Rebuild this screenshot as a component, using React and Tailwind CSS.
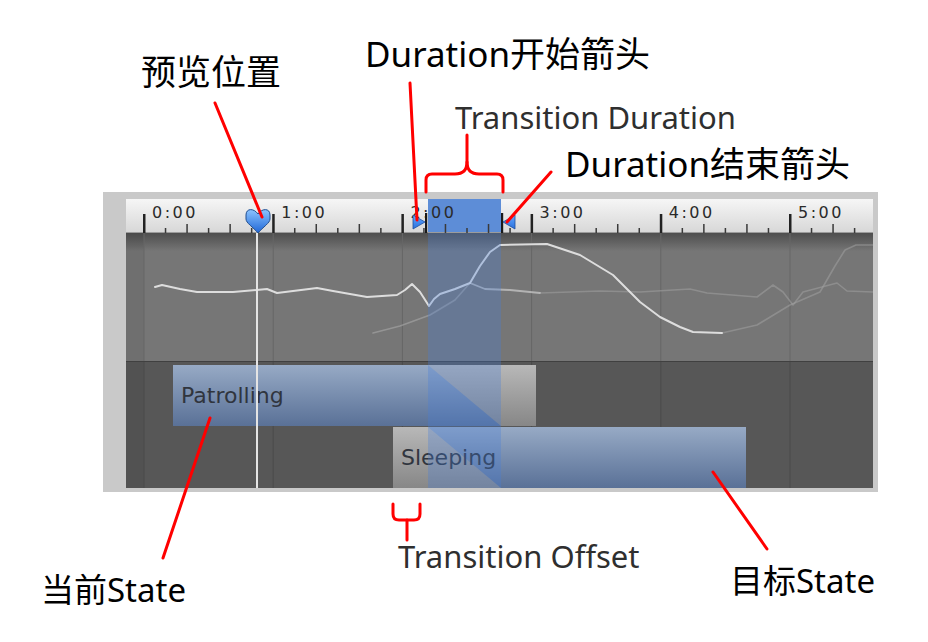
import React from 'react';

// timeline scale: 0:00 sits 18px into the inner panel, one minute = 129.2px
const UNIT = 129.2;
const X0 = 18;
const tx = (t) => X0 + t * UNIT;
const PANEL_W = 747;
const MAJORS = [0, 1, 2, 3, 4, 5];

const minorTicks = () => {
  const out = [];
  MAJORS.forEach((k) => {
    for (let j = 1; j <= 5; j++) {
      const x = tx(k) + (j * UNIT) / 6;
      if (x < PANEL_W) out.push({ x, tall: j % 2 === 0 });
    }
  });
  return out;
};

// curve points in page coordinates, shifted into the curve area when drawn
const brightCurve = [
  [155, 287], [162, 285], [180, 289], [197, 292], [233, 292], [267, 289], [277, 293],
  [317, 288], [333, 291], [367, 297], [397, 295], [405, 290], [412, 284], [420, 292],
  [429, 306], [434, 299], [440, 294], [455, 289], [470, 283], [480, 266], [490, 252],
  [500, 245], [547, 244], [580, 255], [613, 275], [640, 302], [660, 317], [680, 327],
  [693, 332], [722, 333],
];
const sourceAfter = [[470, 283], [485, 289], [510, 290], [540, 293]];
const sourceFaint = [
  [540, 293], [600, 291], [640, 292], [690, 289], [707, 293], [757, 297], [773, 285],
  [783, 292], [793, 305], [803, 292], [837, 283], [847, 291], [873, 292],
];
const targetBefore = [[373, 333], [400, 326], [430, 315], [455, 300], [470, 283]];
const targetAfter = [
  [722, 333], [757, 325], [790, 305], [820, 292], [835, 266], [845, 250], [856, 245], [873, 245],
];

const toPts = (arr) => arr.map(([x, y]) => `${x - 126},${y - 233}`).join(' ');

const blueBg = 'bg-gradient-to-b from-[#97aac5] to-[#5a7197]';
const grayBg = 'bg-gradient-to-b from-[#b8b8b8] to-[#878787]';

const states = [
  {
    label: 'Patrolling',
    start: 47,
    segs: [
      { w: 255, kind: 'blue' },
      { w: 73, kind: 'blue-gray' },
      { w: 35, kind: 'gray' },
    ],
  },
  {
    label: 'Sleeping',
    start: 267,
    segs: [
      { w: 35, kind: 'gray' },
      { w: 73, kind: 'gray-blue' },
      { w: 245, kind: 'blue' },
    ],
  },
];

function Segment({ width, kind }) {
  if (kind === 'blue') return <div className={`h-full ${blueBg}`} style={{ width }} />;
  if (kind === 'gray') return <div className={`h-full ${grayBg}`} style={{ width }} />;
  // diagonal blend: base colour lower-left, other colour upper-right
  const base = kind === 'blue-gray' ? blueBg : grayBg;
  const top = kind === 'blue-gray' ? grayBg : blueBg;
  return (
    <div className={`relative h-full ${base}`} style={{ width }}>
      <div className={`absolute inset-0 ${top} [clip-path:polygon(0_0,100%_0,100%_100%)]`} />
    </div>
  );
}

function StateBar({ state }) {
  return (
    <div className="relative flex h-[61px] shrink-0" style={{ marginLeft: state.start }}>
      {state.segs.map((s, i) => (
        <Segment key={i} width={s.w} kind={s.kind} />
      ))}
      <span className="absolute left-[8px] top-[20px] font-['DejaVu_Sans',sans-serif] text-[22px] leading-none text-[#30353e]">
        {state.label}
      </span>
    </div>
  );
}

function Ruler() {
  return (
    <div className="relative h-[34px] shrink-0 bg-gradient-to-b from-[#f6f6f6] to-[#d8d8d8] border-b border-[#9c9c9c]">
      {/* transition duration on the ruler */}
      <div className="absolute top-0 bottom-0 left-[302px] w-[73px] bg-[#5d8dd7]" />
      <svg className="absolute left-0 top-0" width={PANEL_W} height="34">
        {MAJORS.map((k) => (
          <rect key={k} x={tx(k) - 1} y="15" width="2.5" height="19" fill="#222" />
        ))}
        {minorTicks().map((t, i) => (
          <rect key={i} x={t.x - 0.75} y={t.tall ? 25 : 29} width="1.5" height={t.tall ? 9 : 5} fill="#3a3a3a" />
        ))}
      </svg>
      <div className="absolute inset-0 flex pl-[26px] pt-[6px]">
        {MAJORS.map((k) => (
          <span
            key={k}
            className="w-[129.2px] shrink-0 font-['DejaVu_Sans',sans-serif] text-[16px] leading-none tracking-[2.5px] text-[#2a2a2a]"
          >
            {k}:00
          </span>
        ))}
      </div>
      <svg className="absolute left-0 top-0" width={PANEL_W} height="34">
        <defs>
          <linearGradient id="mk" x1="0" y1="0" x2="0" y2="1">
            <stop offset="0" stopColor="#8cc4ff" />
            <stop offset="1" stopColor="#1f66d6" />
          </linearGradient>
          <linearGradient id="ar" x1="0" y1="0" x2="0" y2="1">
            <stop offset="0" stopColor="#63a8ff" />
            <stop offset="1" stopColor="#2a6fdc" />
          </linearGradient>
        </defs>
        {/* duration start arrow */}
        <polygon points="287,16 299,23 287,30" fill="url(#ar)" stroke="#1d4f9e" strokeWidth="0.8" />
        <rect x="299" y="14" width="2.2" height="20" fill="#1a1a1a" />
        {/* duration end arrow */}
        <rect x="375" y="14" width="2.2" height="20" fill="#1a1a1a" />
        <polygon points="389,16 377,23 389,30" fill="url(#ar)" stroke="#1d4f9e" strokeWidth="0.8" />
        {/* preview marker */}
        <path
          d="M132 15 C128 9 120 9 120 16 L120 20 C120 24 127 28 132 34 C137 28 144 24 144 20 L144 16 C144 9 136 9 132 15 Z"
          fill="url(#mk)"
          stroke="#234f8f"
          strokeWidth="1"
        />
      </svg>
    </div>
  );
}

function CurveArea() {
  return (
    <div className="relative h-[128px] shrink-0 bg-[#767676] overflow-hidden">
      <div className="absolute inset-x-0 top-0 h-[18px] bg-gradient-to-b from-[#4e4e4e] to-[#767676]" />
      <svg className="absolute left-0 top-0" width={PANEL_W} height="128">
        <rect x="0" y="0" width={X0} height="128" fill="#000" opacity="0.06" />
        {MAJORS.map((k) => (
          <rect key={k} x={tx(k) - 0.5} y="0" width="1" height="128" fill="#666" />
        ))}
        <g fill="none" strokeLinejoin="round" strokeLinecap="round">
          <polyline points={toPts(targetBefore)} stroke="#a8a8a8" strokeWidth="1.6" opacity="0.6" />
          <polyline points={toPts(sourceFaint)} stroke="#a0a0a0" strokeWidth="1.6" opacity="0.55" />
          <polyline points={toPts(targetAfter)} stroke="#a0a0a0" strokeWidth="1.6" opacity="0.55" />
          <polyline points={toPts(sourceAfter)} stroke="#c8c8c8" strokeWidth="1.8" opacity="0.75" />
          <polyline points={toPts(brightCurve)} stroke="#e6e6e6" strokeWidth="2" opacity="0.92" />
        </g>
      </svg>
    </div>
  );
}

function StatesArea() {
  return (
    <div className="relative flex-1 flex flex-col gap-px pt-[3px] bg-[#575757] border-t border-[#404040]">
      <svg className="absolute left-0 top-0" width={PANEL_W} height="126">
        <rect x="0" y="0" width={X0} height="126" fill="#000" opacity="0.05" />
        {MAJORS.map((k) => (
          <rect key={k} x={tx(k) - 0.5} y="0" width="1" height="126" fill="#4b4b4b" />
        ))}
      </svg>
      {states.map((s) => (
        <StateBar key={s.label} state={s} />
      ))}
    </div>
  );
}

export default function App() {
  const label = "absolute whitespace-nowrap leading-none text-black font-['Noto_Sans','Noto_Sans_CJK_SC',sans-serif]";
  const gray = "absolute whitespace-nowrap leading-none text-[#2f2f2f] font-['Noto_Sans',sans-serif] text-[31px]";

  return (
    <div className="relative w-[928px] h-[642px] bg-white overflow-hidden">
      <div className="pt-[192px] pl-[103px]">
        <div className="w-[775px] h-[300px] bg-[#c9c9c9] pl-[23px] pt-[7px] pr-[5px] pb-[4px]">
          <div className="relative h-full flex flex-col">
            <Ruler />
            <CurveArea />
            <StatesArea />
            {/* transition duration column */}
            <div className="absolute top-[34px] bottom-0 left-[302px] w-[73px] bg-[rgba(70,125,220,0.3)]" />
            {/* preview position line */}
            <div className="absolute top-[34px] bottom-0 left-[130px] w-[2px] bg-[#e4e4e4]" />
          </div>
        </div>
      </div>

      {/* annotations */}
      <span className={`${label} text-[35px] left-[141px] top-[54px]`}>预览位置</span>
      <span className={`${label} text-[35px] left-[365px] top-[36px]`}>Duration开始箭头</span>
      <span className={`${gray} left-[455px] top-[102px]`}>Transition Duration</span>
      <span className={`${label} text-[35px] left-[565px] top-[146px]`}>Duration结束箭头</span>
      <span className={`${gray} left-[398px] top-[541px]`}>Transition Offset</span>
      <span className={`${label} text-[33px] left-[41px] top-[573px]`}>当前State</span>
      <span className={`${label} text-[33px] left-[730px] top-[564px]`}>目标State</span>

      <svg className="absolute left-0 top-0 pointer-events-none" width="928" height="642">
        <g stroke="#ff0000" strokeWidth="3" fill="none" strokeLinecap="round" strokeLinejoin="round">
          <line x1="215" y1="103" x2="262" y2="217" />
          <line x1="410" y1="83" x2="417" y2="220" />
          <line x1="551" y1="172" x2="507" y2="222" />
          <line x1="210" y1="418" x2="163" y2="558" />
          <line x1="713" y1="472" x2="767" y2="549" />
          <path d="M467 135 L467 162 Q467 174 455 174 L432 174 Q426 174 426 180 L426 192" />
          <path d="M467 162 Q467 174 479 174 L497 174 Q503 174 503 180 L503 192" />
          <path d="M393 504 L393 514 Q393 520 399 520 L414 520 Q420 520 420 514 L420 504" />
          <path d="M407 520 L407 540" />
        </g>
      </svg>
    </div>
  );
}
